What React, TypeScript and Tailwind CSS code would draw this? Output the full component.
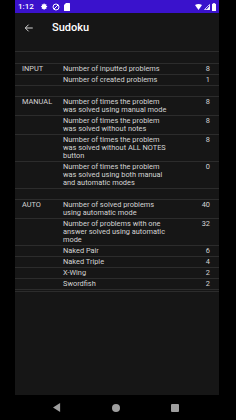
import React from 'react';

type Row = { label?: string; text: string; value: string };

const sections: Row[][] = [
  [
    { label: 'INPUT', text: 'Number of inputted problems', value: '8' },
    { text: 'Number of created problems', value: '1' },
  ],
  [
    { label: 'MANUAL', text: 'Number of times the problem was solved using manual mode', value: '8' },
    { text: 'Number of times the problem was solved without notes', value: '8' },
    { text: 'Number of times the problem was solved without ALL NOTES button', value: '8' },
    { text: 'Number of times the problem was solved using both manual and automatic modes', value: '0' },
  ],
  [
    { label: 'AUTO', text: 'Number of solved problems using automatic mode', value: '40' },
    { text: 'Number of problems with one answer solved using automatic mode', value: '32' },
    { text: 'Naked Pair', value: '6' },
    { text: 'Naked Triple', value: '4' },
    { text: 'X-Wing', value: '2' },
    { text: 'Swordfish', value: '2' },
  ],
];

function StatusBar() {
  return (
    <div className="h-[13px] bg-[#3a12cc] flex items-center px-[3px] text-white">
      <span className="text-[8px] leading-none font-medium">1:12</span>
      <div className="flex items-center gap-[4px] ml-[7px]">
        {/* gear */}
        <svg width="7" height="7" viewBox="0 0 24 24" fill="white">
          <path d="M12 8a4 4 0 100 8 4 4 0 000-8zm9 5.5v-3l-2.6-.6a7 7 0 00-.8-1.9l1.4-2.3-2.1-2.1-2.3 1.4a7 7 0 00-1.9-.8L12.1 2h-3l-.6 2.6a7 7 0 00-1.9.8L4.3 4 2.2 6.1l1.4 2.3a7 7 0 00-.8 1.9L.2 11v3l2.6.6c.2.7.4 1.3.8 1.9l-1.4 2.3 2.1 2.1 2.3-1.4c.6.4 1.2.6 1.9.8l.6 2.6h3l.6-2.6c.7-.2 1.3-.4 1.9-.8l2.3 1.4 2.1-2.1-1.4-2.3c.4-.6.6-1.2.8-1.9z" />
        </svg>
        {/* data saver */}
        <svg width="8" height="8" viewBox="0 0 24 24" fill="none" stroke="white" strokeWidth="3">
          <circle cx="12" cy="12" r="9" />
          <path d="M6 18L18 6" />
        </svg>
        {/* sim */}
        <svg width="6" height="8" viewBox="0 0 12 16" fill="white">
          <path d="M4 0h7a1 1 0 011 1v14a1 1 0 01-1 1H1a1 1 0 01-1-1V4z" />
        </svg>
      </div>
      <div className="ml-auto flex items-center gap-[2px]">
        <svg width="7" height="6" viewBox="0 0 14 12" fill="white">
          <path d="M0 2Q7-2 14 2L7 12z" />
        </svg>
        <svg width="6" height="6" viewBox="0 0 12 12" fill="none" stroke="white" strokeWidth="1.5">
          <path d="M11 1v10H1z" />
          <path d="M11 5v6H6z" fill="white" />
        </svg>
        <svg width="4" height="8" viewBox="0 0 8 16" fill="white">
          <path d="M2.5 0h3v1.5H7a1 1 0 011 1V15a1 1 0 01-1 1H1a1 1 0 01-1-1V2.5a1 1 0 011-1h1.5z" />
        </svg>
      </div>
    </div>
  );
}

function Toolbar() {
  return (
    <div className="h-[39px] flex items-start pt-[9px] border-b border-[#2c2c2c]">
      <div className="h-[12px] flex items-center">
        <svg className="ml-[9px]" width="10" height="10" viewBox="0 0 24 24" fill="none" stroke="#e6e6e6" strokeWidth="2.2">
          <path d="M21 12H4M11 4l-8 8 8 8" />
        </svg>
      </div>
      <span className="ml-[18px] h-[12px] leading-[12px] text-[11px] font-medium text-white">Sudoku</span>
    </div>
  );
}

function Spacer({ first }: { first?: boolean }) {
  return <div className={first ? 'h-[12px] border-b border-[#2c2c2c]' : 'h-[11px] border-b border-[#2c2c2c]'} />;
}

function StatRow({ row }: { row: Row }) {
  return (
    <div className="grid grid-cols-[41px_106px_1fr] pl-[7px] pr-[9px] py-[1px] border-b border-[#2c2c2c] text-[7.4px] leading-[8px] text-[#d4d4d4]">
      <span>{row.label ?? ''}</span>
      <span>{row.text}</span>
      <span className="text-right">{row.value}</span>
    </div>
  );
}

export default function App() {
  return (
    <div className="w-[236px] h-[420px] bg-black flex flex-col" style={{ fontFamily: 'Roboto, "Noto Sans", sans-serif' }}>
      <div className="ml-[15px] w-[204px] h-[395px] bg-[#161616] flex flex-col">
        <StatusBar />
        <Toolbar />
        {sections.map((rows, i) => (
          <div key={i}>
            <Spacer first={i === 0} />
            {rows.map((r, j) => (
              <StatRow key={j} row={r} />
            ))}
          </div>
        ))}
        <div className="h-[2px] border-b border-[#2c2c2c]" />
      </div>
      <div className="flex-1 flex items-center pl-[53px] gap-[51px]">
        <svg width="8" height="9" viewBox="0 0 9 10" fill="#9e9e9e">
          <path d="M8 0v10L0 5z" />
        </svg>
        <div className="w-[8px] h-[8px] rounded-full bg-[#9e9e9e]" />
        <div className="w-[8px] h-[8px] rounded-[1px] bg-[#9e9e9e]" />
      </div>
    </div>
  );
}
